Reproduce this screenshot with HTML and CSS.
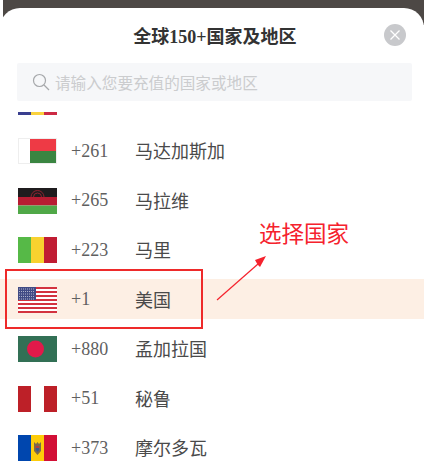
FILE: index.html
```html
<!DOCTYPE html>
<html lang="zh">
<head>
<meta charset="utf-8">
<title>选择国家</title>
<link rel="stylesheet" href="styles.css">
</head>
<body>
<div class="backdrop">
  <div class="sheet">
    <header class="head">
      <h1 class="title">全球150+国家及地区</h1>
      <button class="close" aria-label="关闭">
        <svg width="12" height="12" viewBox="0 0 12 12"><path d="M1.5 1.5l9 9M10.5 1.5l-9 9" stroke="#fff" stroke-width="1.3" fill="none"/></svg>
      </button>
    </header>
    <div class="search">
      <svg class="search-icon" width="18" height="18" viewBox="0 0 18 18"><circle cx="7.5" cy="7.5" r="6" stroke="#a6a8ab" stroke-width="1.2" fill="none"/><path d="M12 12l5 5" stroke="#a6a8ab" stroke-width="1.3" fill="none"/></svg>
      <span class="placeholder">请输入您要充值的国家或地区</span>
    </div>
    <div class="list">
      <div class="peek"><i class="b1"></i><i class="b2"></i><i class="b3"></i></div>
      <div class="row">
        <svg class="flag" viewBox="0 0 39 26"><rect width="39" height="26" fill="#fff"/><rect x="12" width="27" height="13" fill="#ee3a45"/><rect x="12" y="13" width="27" height="13" fill="#3a8541"/><rect x=".5" y=".5" width="38" height="25" fill="none" stroke="#eee"/></svg>
        <span class="code">+261</span><span class="name">马达加斯加</span>
      </div>
      <div class="row">
        <svg class="flag" viewBox="0 0 39 26"><rect width="39" height="9" fill="#1f1c1e"/><rect y="9" width="39" height="8.5" fill="#b81c32"/><rect y="17.5" width="39" height="8.5" fill="#50a848"/><path d="M13 9a6.500 6.500 0 0 1 13 0M15.500 9a4 4 0 0 1 8 0" stroke="#8f2230" stroke-width="1" fill="none"/></svg>
        <span class="code">+265</span><span class="name">马拉维</span>
      </div>
      <div class="row">
        <svg class="flag" viewBox="0 0 39 26"><rect width="13" height="26" fill="#56b947"/><rect x="13" width="13" height="26" fill="#f8d22f"/><rect x="26" width="13" height="26" fill="#c01d33"/></svg>
        <span class="code">+223</span><span class="name">马里</span>
      </div>
      <div class="row active">
        <svg class="flag" viewBox="0 0 39 26"><rect width="39" height="26" fill="#fff"/><path d="M0 1h39M0 5h39M0 9h39M0 13h39M0 17h39M0 21h39M0 25h39" stroke="#d3323f" stroke-width="2"/><rect width="18" height="13" fill="#414b85"/><path d="M1 2h16M1 4.500h16M1 7h16M1 9.500h16M1 12h16" stroke="#aeb2cb" stroke-width="1" stroke-dasharray="1 1"/></svg>
        <span class="code">+1</span><span class="name">美国</span>
      </div>
      <div class="row">
        <svg class="flag" viewBox="0 0 39 26"><rect width="39" height="26" fill="#327055"/><circle cx="17.500" cy="13" r="8.500" fill="#e2194a"/></svg>
        <span class="code">+880</span><span class="name">孟加拉国</span>
      </div>
      <div class="row">
        <svg class="flag" viewBox="0 0 39 26"><rect width="39" height="26" fill="#fff"/><rect width="13" height="26" fill="#bd2028"/><rect x="26" width="13" height="26" fill="#bd2028"/></svg>
        <span class="code">+51</span><span class="name">秘鲁</span>
      </div>
      <div class="row">
        <svg class="flag" viewBox="0 0 39 26"><rect width="13" height="26" fill="#0046ae"/><rect x="13" width="13" height="26" fill="#fdcc09"/><rect x="26" width="13" height="26" fill="#d20f36"/><path d="M16 7l2 2 1.500-2 1.500 2 2-2v9l-3.500 4-3.500-4z" fill="#7d6a4a"/><path d="M17.800 11h3.400v2h-3.400z" fill="#b5413f"/><path d="M17.800 13h3.400v2l-1.700 2-1.700-2z" fill="#3d5a8a"/></svg>
        <span class="code">+373</span><span class="name">摩尔多瓦</span>
      </div>
    </div>
  </div>
  <div class="callout-box"></div>
  <svg class="callout-arrow" width="60" height="50" viewBox="0 0 60 50"><path d="M1 47L42 11" stroke="#f5222d" stroke-width="1.200" fill="none"/><path d="M50 3L39 7l2.500 4.500L44 14z" fill="#f5222d"/></svg>
  <span class="callout-text">选择国家</span>
</div>
</body>
</html>
```
FILE: styles.css
```css
* { box-sizing: border-box; }
html, body { margin: 0; height: 100%; }
body { background: #fff; font-family: "Liberation Serif", "Noto Sans CJK SC", serif; overflow: hidden; }
.backdrop { position: relative; height: 473px; background: linear-gradient(90deg, #fff 3px, transparent 3px), linear-gradient(#4d4845 0 25px, #fff 25px); padding: 8px 0 0; }
.sheet { background: #fff; border-radius: 20px 20px 0 0; height: 465px; overflow: hidden; display: flex; flex-direction: column; }
.head { display: flex; align-items: center; justify-content: center; height: 55px; padding: 0 0 2px 6px; position: relative; }
.title { margin: 0; font-size: 18px; font-weight: 700; color: #333; }
.close { position: absolute; right: 18px; top: 16px; width: 22px; height: 22px; padding: 0; border: 0; border-radius: 50%; background: #c8c9cc; display: flex; align-items: center; justify-content: center; }
.search { margin: 0 12px 0 17px; height: 38px; background: #f6f7f9; border-radius: 2px; display: flex; align-items: center; padding-left: 15px; gap: 5px; }
.placeholder { font-size: 15.600px; color: #cbccce; font-family: "Noto Sans CJK SC", sans-serif; }
.list { flex: 1; overflow: hidden; padding-top: 11px; }
.peek { display: flex; margin-left: 18px; width: 39px; height: 3px; margin-bottom: 11.250px; }
.peek i { flex: 1; }
.b1 { background: #3a3f8f; } .b2 { background: #fad23c; } .b3 { background: #cc2a44; }
.row { display: flex; align-items: center; height: 49.500px; padding-left: 18px; }
.row.active { background: #fdefe4; height: 40px; margin: 4.500px 0 5px; padding-top: 1px; }
.flag { width: 39px; height: 26px; flex: none; }
.code { margin-left: 14px; width: 64px; font-size: 18px; color: #5f5f5f; }
.name { font-size: 18px; color: #4a4a4a; font-family: "Noto Sans CJK SC", sans-serif; margin-top: -2px; }
.callout-box { position: absolute; left: 5px; top: 269px; width: 198px; height: 60px; border: 2px solid #ee2a2a; }
.callout-arrow { position: absolute; left: 216px; top: 253px; }
.callout-text { position: absolute; left: 259px; top: 217px; font-size: 22.500px; line-height: 30px; color: #f5222d; font-family: "Noto Sans CJK SC", sans-serif; }
```
